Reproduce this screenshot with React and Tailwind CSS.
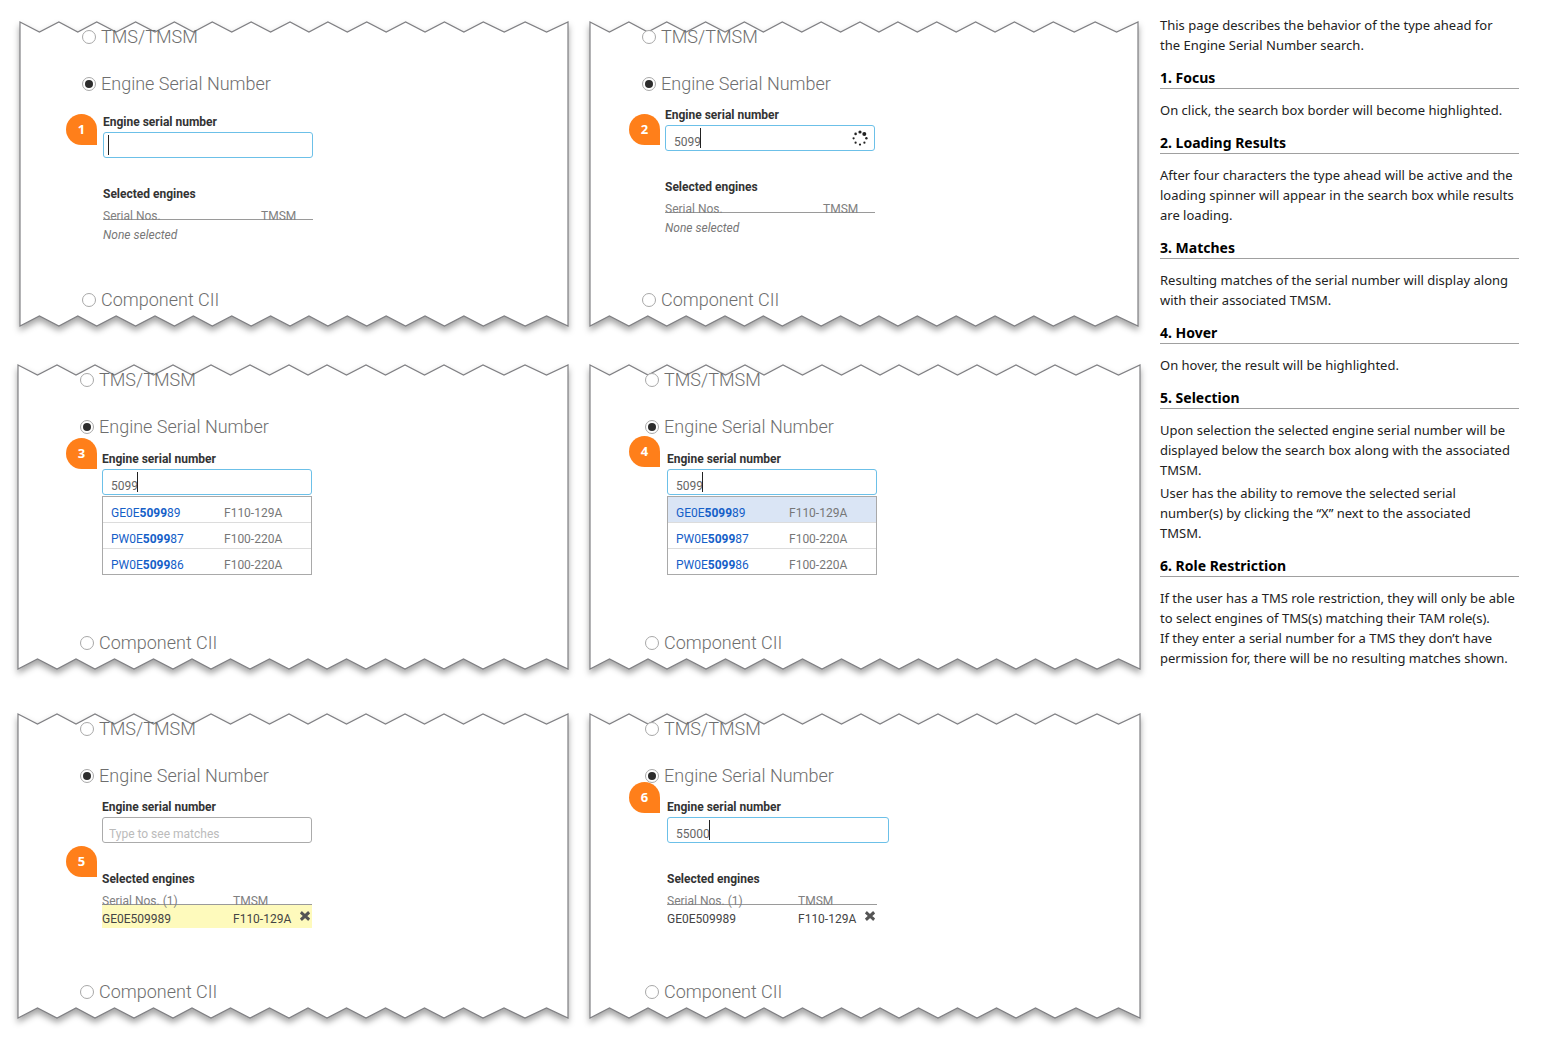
import React from "react";

const PEAKS = [0, 39, 77, 116, 155, 193, 232, 271, 309, 348, 387, 426, 465, 507, 550];

function tornPath() {
  const top = [];
  const bottom = [];
  PEAKS.forEach((x, i) => {
    top.push(`${x},0`);
    bottom.unshift(`${x},304`);
    if (i < PEAKS.length - 1) {
      const mid = (x + PEAKS[i + 1]) / 2;
      top.push(`${mid},10`);
      bottom.unshift(`${mid},294`);
    }
  });
  return [...top, ...bottom].join(" ");
}

const TORN = tornPath();

function TornPaper() {
  return (
    <svg
      className="absolute inset-0 h-full w-full overflow-visible drop-shadow-[0px_4px_3px_rgba(0,0,0,0.36)]"
      viewBox="0 0 550 304"
      preserveAspectRatio="none"
      aria-hidden="true"
    >
      <polygon points={TORN} fill="#ffffff" stroke="#808084" strokeWidth="1.2" vectorEffect="non-scaling-stroke" />
    </svg>
  );
}

function Badge({ n, className }) {
  return (
    <span
      className={`absolute flex h-[31px] w-[31px] justify-center rounded-full rounded-br-none bg-[#ff7f1a] pt-[5px] font-['Noto_Sans',sans-serif] text-[13px] leading-5 font-bold text-white ${className}`}
    >
      {n}
    </span>
  );
}

function Option({ id, group, label, checked = false }) {
  return (
    <div className="flex h-6 items-center gap-[5px]">
      <input
        id={id}
        type="radio"
        name={group}
        defaultChecked={checked}
        className="grid h-[14px] w-[14px] appearance-none place-content-center rounded-full border border-[#a8a8a8] bg-white before:h-2 before:w-2 before:rounded-full checked:before:bg-[#2c2c2c]"
      />
      <label htmlFor={id} className="text-[18px] leading-6 font-light text-[#6e6e6e]">
        {label}
      </label>
    </div>
  );
}

function Spinner() {
  const dots = [
    [8, 2, 1.6],
    [12.3, 3.9, 2],
    [14.4, 8.3, 1.2],
    [12.4, 12.7, 1.1],
    [8, 14.6, 1.1],
    [3.6, 12.7, 1.1],
    [1.6, 8.3, 1.1],
    [3.6, 3.9, 1.3],
  ];
  return (
    <svg className="absolute top-[5px] right-[7px] h-4 w-4" viewBox="0 0 16 16" fill="#222" aria-hidden="true">
      {dots.map(([x, y, r]) => (
        <circle key={`${x}-${y}`} cx={x} cy={y} r={r} />
      ))}
    </svg>
  );
}

function SearchBox({ id, value, placeholder, caret, loading, wide, label }) {
  return (
    <>
      <label htmlFor={id} className="block text-[12px] leading-4 font-bold text-[#333]">
        {label}
      </label>
      <div className={`relative mt-0.5 ${wide ? "w-[222px]" : "w-[210px]"}`}>
        <input
          id={id}
          type="text"
          defaultValue={value}
          placeholder={placeholder}
          className={`block h-[26px] w-full rounded-[3px] border bg-white pt-[7px] text-[12px] leading-4 text-[#666] outline-none placeholder:text-[#bbb] ${
            caret ? "border-[#6cc0e8] pl-2" : "border-[#ababab] pl-1.5"
          }`}
        />
        {caret && <span className={`absolute top-[3px] h-5 w-px bg-[#222] ${caret}`} />}
        {loading && <Spinner />}
      </div>
    </>
  );
}

function Matches({ hovered }) {
  const rows = [
    ["GE0E", "5099", "89", "F110-129A"],
    ["PW0E", "5099", "87", "F100-220A"],
    ["PW0E", "5099", "86", "F100-220A"],
  ];
  return (
    <ul className="mt-px w-[210px] border border-[#a9a9a9] bg-white text-[12px] leading-[25px]">
      {rows.map(([a, b, c, tmsm], i) => (
        <li key={c} className={i > 0 ? "border-t border-[#dcdcdc]" : ""}>
          <button
            type="button"
            className={`flex h-[25px] w-full pt-1 pl-2 text-left ${hovered && i === 0 ? "bg-[#dae5f5]" : ""}`}
          >
            <span className="w-[113px] text-[#1560c8]">
              {a}
              <b className="font-bold">{b}</b>
              {c}
            </span>
            <span className="text-[#777]">{tmsm}</span>
          </button>
        </li>
      ))}
    </ul>
  );
}

function RemoveIcon() {
  return (
    <svg className="h-[10px] w-[10px]" viewBox="0 0 10 10" aria-hidden="true">
      <path d="M2 2.3 8 7.7M8 2.3 2 7.7" stroke="#555" strokeWidth="3.1" strokeLinecap="square" />
    </svg>
  );
}

function Selected({ filled, highlight }) {
  return (
    <>
      <h3 className="mt-7 text-[12px] leading-4 font-bold text-[#333]">Selected engines</h3>
      <table className="mt-1.5 w-[210px] table-fixed border-collapse text-left text-[12px] leading-4">
        <thead className="text-[#808080]">
          <tr className="border-b border-[#9a9a9a]">
            <th className={`p-0 font-normal ${filled ? "w-[131px]" : "w-[158px]"}`}>
              <div className="h-[11px]">{filled ? "Serial Nos. (1)" : "Serial Nos."}</div>
            </th>
            <th className="p-0 font-normal">
              <div className="h-[11px]">TMSM</div>
            </th>
            {filled && <td className="w-4 p-0" />}
          </tr>
        </thead>
        <tbody>
          {filled ? (
            <tr className={`h-[23px] text-[#444] ${highlight ? "bg-[#fefabc]" : ""}`}>
              <td className="p-0 pt-1.5">GE0E509989</td>
              <td className="p-0 pt-1.5">F110-129A</td>
              <td className="p-0">
                <button type="button" aria-label="Remove GE0E509989" className="block pl-1">
                  <RemoveIcon />
                </button>
              </td>
            </tr>
          ) : (
            <tr>
              <td colSpan={2} className="p-0 pt-[7px] text-[#777] italic">
                None selected
              </td>
            </tr>
          )}
        </tbody>
      </table>
    </>
  );
}

function Panel({ n, className, indent, fieldIndent, badge, children }) {
  const group = `search-by-${n}`;
  return (
    <section className={`relative h-[304px] ${className}`}>
      <TornPaper />
      <div className={`relative pt-[3px] ${indent}`}>
        <Option id={`tms-${n}`} group={group} label="TMS/TMSM" />
        <div className="mt-[23px]">
          <Option id={`esn-${n}`} group={group} label="Engine Serial Number" checked />
        </div>
        <div className={`h-[192px] ${fieldIndent}`}>{children}</div>
        <Option id={`cii-${n}`} group={group} label="Component CII" />
      </div>
      <Badge n={n} className={badge} />
    </section>
  );
}

const NOTES = [
  ["1. Focus", ["On click, the search box border will become highlighted."]],
  [
    "2. Loading Results",
    ["After four characters the type ahead will be active and the\nloading spinner will appear in the search box while results\nare loading."],
  ],
  ["3. Matches", ["Resulting matches of the serial number will display along\nwith their associated TMSM."]],
  ["4. Hover", ["On hover, the result will be highlighted."]],
  [
    "5. Selection",
    [
      "Upon selection the selected engine serial number will be\ndisplayed below the search box along with the associated\nTMSM.",
      "User has the ability to remove the selected serial\nnumber(s) by clicking the “X” next to the associated\nTMSM.",
    ],
  ],
  [
    "6. Role Restriction",
    [
      "If the user has a TMS role restriction, they will only be able\nto select engines of TMS(s) matching their TAM role(s).\nIf they enter a serial number for a TMS they don’t have\npermission for, there will be no resulting matches shown.",
    ],
  ],
];

export default function App() {
  const label = "Engine serial number";
  return (
    <div className="flex gap-5 bg-white pr-[23px] pb-[22px] pl-[18px] font-[Roboto,sans-serif]">
      <main className="grid flex-1 grid-cols-2 content-start gap-x-[22px] gap-y-[39px] pt-[22px]">
        <Panel n={1} className="ml-0.5" indent="pl-[62px]" fieldIndent="pt-[18px] pl-[21px]" badge="top-[92px] left-[46px]">
          <SearchBox id="search-1" label={label} caret="left-[5px]" />
          <Selected />
        </Panel>
        <Panel n={2} className="mr-0.5" indent="pl-[52px]" fieldIndent="pt-[11px] pl-[23px]" badge="top-[92px] left-[39px]">
          <SearchBox id="search-2" label={label} value="5099" caret="left-[35px]" loading />
          <Selected />
        </Panel>
        <Panel n={3} className="" indent="pl-[62px]" fieldIndent="pt-3 pl-[22px]" badge="top-[73px] left-[48px]">
          <SearchBox id="search-3" label={label} value="5099" caret="left-[35px]" />
          <Matches />
        </Panel>
        <Panel n={4} className="" indent="pl-[55px]" fieldIndent="pt-3 pl-[22px]" badge="top-[71px] left-[39px]">
          <SearchBox id="search-4" label={label} value="5099" caret="left-[35px]" />
          <Matches hovered />
        </Panel>
        <Panel n={5} className="mt-1.5" indent="pl-[62px]" fieldIndent="pt-[11px] pl-[22px]" badge="top-[132px] left-[48px]">
          <SearchBox id="search-5" label={label} placeholder="Type to see matches" />
          <Selected filled highlight />
        </Panel>
        <Panel n={6} className="mt-1.5" indent="pl-[55px]" fieldIndent="pt-[11px] pl-[22px]" badge="top-[68px] left-[39px]">
          <SearchBox id="search-6" label={label} value="55000" caret="left-[42px]" wide />
          <Selected filled />
        </Panel>
      </main>
      <aside className="w-[359px] shrink-0 pt-[15px] font-['Noto_Sans',sans-serif] text-[13px] leading-5 whitespace-pre text-[#222]">
        <p>{"This page describes the behavior of the type ahead for\nthe Engine Serial Number search."}</p>
        {NOTES.map(([title, paragraphs]) => (
          <section key={title} className="pt-3">
            <h2 className="mb-[11px] h-[22px] border-b border-[#a0a0a0] text-[14px] leading-[22px] font-bold text-black">
              {title}
            </h2>
            {paragraphs.map((text, i) => (
              <p key={text} className={i > 0 ? "mt-[3px]" : ""}>
                {text}
              </p>
            ))}
          </section>
        ))}
      </aside>
    </div>
  );
}
